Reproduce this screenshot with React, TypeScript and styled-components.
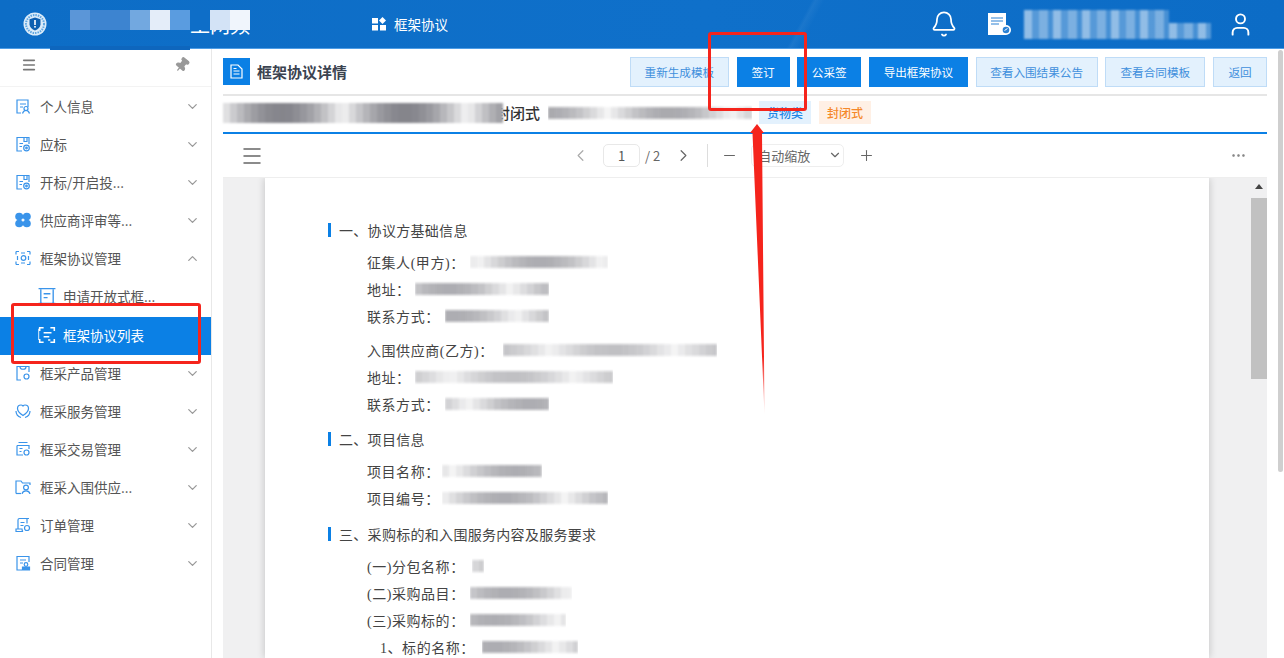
import React from "react";
import styled, { createGlobalStyle } from "styled-components";
import { Bell, ChevronDown, ChevronLeft, ChevronRight, ChevronUp, Ellipsis, Menu, Minus, Pin, Plus, User } from "lucide-react";

const GlobalStyle = createGlobalStyle`
  html, body { margin: 0; padding: 0; height: 100%; overflow: hidden; background: #fff; }
  body { font-family: "Noto Sans CJK SC", "Noto Sans", sans-serif; }
  * { box-sizing: border-box; }
`;

const Page = styled.div`
  position: relative;
  width: 1284px;
  height: 658px;
  overflow: hidden;
  display: flex;
  flex-direction: column;
`;

const Header = styled.header`
  position: relative;
  height: 49px;
  flex: none;
  display: flex;
  align-items: center;
  color: #fff;
  border-bottom: 1px solid #4e9de6;
  background:
    linear-gradient(118deg, transparent 62%, rgba(255, 255, 255, 0.05) 62.3%, transparent 63%),
    linear-gradient(90deg, #0d6dc6 0%, #0f70ca 55%, #0c6cc6 100%);
`;

const Logo = styled.div`
  width: 24px;
  height: 24px;
  margin-left: 23px;
  flex: none;
`;

const Brand = styled.div`
  position: relative;
  width: 180px;
  height: 48px;
  margin-left: 23px;
  display: flex;
  align-items: center;
  justify-content: flex-end;
  font-size: 20px;
`;

const BrandBlocks = styled.div`
  position: absolute;
  top: 10px;
  left: 0;
  display: flex;
  height: 20px;
`;

const BrandBlock = styled.span<{ $c: string; $w?: number }>`
  display: block;
  width: ${(p) => p.$w ?? 20}px;
  height: 20px;
  background: ${(p) => p.$c};
`;

const BrandEdge = styled.div`
  position: absolute;
  left: -20px;
  bottom: -2px;
  width: 140px;
  height: 4px;
  background: #0e66bd;
`;

const NavLink = styled.div`
  margin-left: 122px;
  display: flex;
  align-items: center;
  gap: 8px;
  font-size: 13.5px;
`;

const HeaderRight = styled.div`
  margin-left: auto;
  display: flex;
  align-items: center;
  padding-right: 30px;
`;

const HeaderIcon = styled.div<{ $gap?: number }>`
  display: flex;
  margin-right: ${(p) => p.$gap ?? 0}px;
`;

const UserBlur = styled.div`
  width: 187px;
  margin-right: 16px;
  display: flex;
  flex-direction: column;
  filter: blur(1.2px);
`;

const UserBlurRow = styled.span<{ $w: number; $h: number }>`
  display: block;
  width: ${(p) => p.$w}px;
  height: ${(p) => p.$h}px;
  background: repeating-linear-gradient(
    90deg,
    rgba(255, 255, 255, 0.55) 0 8px,
    rgba(255, 255, 255, 0.3) 8px 15px,
    rgba(255, 255, 255, 0.46) 15px 24px,
    rgba(255, 255, 255, 0.24) 24px 29px
  );
`;

const Body = styled.div`
  flex: 1;
  display: flex;
  min-height: 0;
`;

const Sidebar = styled.aside`
  width: 212px;
  flex: none;
  border-right: 1px solid #e8e8e8;
  color: #555;
`;

const SideTop = styled.div`
  height: 38px;
  display: flex;
  align-items: center;
  justify-content: space-between;
  padding: 0 21px 6px 21px;
  color: #777;
  border-bottom: 1px solid #f3f3f3;
`;

const PinMark = styled.span`
  display: flex;
  color: #999;
  transform: rotate(40deg);
`;

const SideItem = styled.div<{ $active?: boolean; $sub?: boolean }>`
  height: 38px;
  display: flex;
  align-items: center;
  margin-top: ${(p) => (p.$active ? 2 : 0)}px;
  margin-bottom: ${(p) => (p.$active ? -1 : 0)}px;
  padding-top: 0;
  padding-bottom: ${(p) => (p.$active ? 2 : 0)}px;
  padding-left: ${(p) => (p.$sub ? 38 : 15)}px;
  padding-right: 11px;
  gap: ${(p) => (p.$sub ? 7 : 9)}px;
  font-size: 13.5px;
  background: ${(p) => (p.$active ? "#0b80e5" : "transparent")};
  color: ${(p) => (p.$active ? "#fff" : "#555")};
`;

const SideLabel = styled.span`
  flex: 1;
  white-space: nowrap;
`;

const GlyphSvg = styled.svg`
  flex: none;
`;

const Main = styled.main`
  flex: 1;
  min-width: 0;
  padding: 0 9px 0 11px;
  display: flex;
  flex-direction: column;
  margin-right: 8px;
  position: relative;
`;

const TitleBar = styled.div`
  height: 47px;
  flex: none;
  display: flex;
  align-items: center;
  border-bottom: 2px solid #e6e6e6;
`;

const TitleIcon = styled.div`
  width: 27px;
  height: 27px;
  background: #0b80e5;
  display: flex;
  align-items: center;
  justify-content: center;
  margin-right: 7px;
`;

const Title = styled.h1`
  margin: 0;
  font-size: 15px;
  font-weight: 700;
  color: #3b4350;
`;

const Actions = styled.div`
  margin-left: auto;
  display: flex;
  gap: 7.7px;
`;

const ActionButton = styled.button<{ $w: number; $primary?: boolean }>`
  width: ${(p) => p.$w}px;
  height: 30px;
  padding: 0;
  font: inherit;
  font-size: 11.6px;
  border: 1px solid ${(p) => (p.$primary ? "#0b80e5" : "#bfdcf7")};
  background: ${(p) => (p.$primary ? "#0b80e5" : "#e3f1fd")};
  color: ${(p) => (p.$primary ? "#fff" : "#3f8fdc")};
`;

const InfoBar = styled.div`
  height: 38px;
  flex: none;
  display: flex;
  align-items: center;
  border-bottom: 2px solid #0b80e5;
  padding-bottom: 3px;
`;

// the first blurred block lies over the start of this text, as in the redacted original
const InfoText = styled.span`
  font-size: 15px;
  font-weight: 500;
  color: #333;
  margin: 0 8px 0 -8px;
  white-space: nowrap;
  flex: none;
`;

const Tag = styled.span<{ $orange?: boolean }>`
  width: 52px;
  height: 23px;
  margin-left: ${(p) => (p.$orange ? 8 : 7)}px;
  font-size: 12px;
  font-weight: 500;
  display: flex;
  align-items: center;
  justify-content: center;
  background: ${(p) => (p.$orange ? "#fff0e5" : "#e3f1fd")};
  color: ${(p) => (p.$orange ? "#f5882a" : "#2086e6")};
`;

// pseudo random grey cells, so each blurred block looks a bit different
function mosaicFill(width: number, seed: number, dark: number) {
  const cell = 7;
  const stops: string[] = [];
  for (let x = 0; x < width; x += cell) {
    const n = Math.abs(Math.sin((x + 1) * 12.9898 + seed * 78.233)) % 1;
    const a = (0.06 + n * dark).toFixed(2);
    stops.push(`rgba(70,70,80,${a}) ${x}px ${x + cell}px`);
  }
  return `linear-gradient(90deg, ${stops.join(", ")})`;
}

const Mosaic = styled.span<{ $w: number; $h?: number; $seed?: number; $dark?: number; $ml?: number }>`
  display: inline-block;
  flex: none;
  width: ${(p) => p.$w}px;
  height: ${(p) => p.$h ?? 16}px;
  margin-left: ${(p) => p.$ml ?? 0}px;
  vertical-align: middle;
  filter: blur(1px);
  mask-image: linear-gradient(180deg, transparent, #000 25%, #000 75%, transparent);
  background: ${(p) => mosaicFill(p.$w, p.$seed ?? 3, p.$dark ?? 0.38)};
`;

const CoverMosaic = styled(Mosaic)`
  position: relative;
  z-index: 1;
  mask-image: none;
  background: ${(p) => mosaicFill(p.$w, p.$seed ?? 3, p.$dark ?? 0.38)}, #fff;
`;

const Toolbar = styled.div`
  height: 44px;
  flex: none;
  display: flex;
  align-items: center;
  position: relative;
  color: #666;
  border-bottom: 1px solid #eee;
  padding-left: 17px;
  padding-right: 20px;
`;

const ToolCenter = styled.div`
  position: absolute;
  left: 348px;
  top: 9px;
  height: 24px;
  display: flex;
  align-items: center;
`;

const PageInput = styled.div`
  width: 37px;
  height: 23px;
  margin-left: 13px;
  border: 1px solid #e8e8e8;
  border-radius: 5px;
  display: flex;
  align-items: center;
  justify-content: center;
  font-size: 13px;
  color: #555;
`;

const PageTotal = styled.span`
  font-size: 13px;
  margin: 0 14px 0 5px;
`;

const ToolDivider = styled.span`
  width: 1px;
  height: 23px;
  background: #ddd;
  margin: 0 13px 0 14px;
`;

const ZoomSelect = styled.div`
  width: 93px;
  height: 23px;
  margin: 0 14px 0 13px;
  border: 1px solid #eee;
  border-radius: 5px;
  display: flex;
  align-items: center;
  justify-content: space-between;
  padding: 0 1px 0 6px;
  font-size: 13px;
  color: #666;
`;

const MoreButton = styled.div`
  margin-left: auto;
  display: flex;
  color: #777;
`;

const Viewer = styled.div`
  flex: 1;
  min-height: 0;
  display: flex;
  justify-content: flex-start;
  background: #f0f0f1;
  padding-left: 42px;
  position: relative;
  overflow: hidden;
`;

const DocPage = styled.div`
  width: 944px;
  background: #fff;
  box-shadow: 0 0 8px rgba(0, 0, 0, 0.2);
  padding: 42px 0 0 63px;
  color: #444;
  font-size: 14px;
  font-family: "Liberation Serif", "Noto Sans CJK SC", serif;
`;

const Heading = styled.div<{ $top?: number }>`
  height: 20px;
  display: flex;
  align-items: center;
  gap: 8px;
  margin-top: ${(p) => p.$top ?? 0}px;
  margin-bottom: 8px;
  letter-spacing: 0.3px;
  &::before {
    content: "";
    width: 3px;
    height: 14px;
    background: #0b80e5;
  }
`;

const Line = styled.div<{ $top?: number; $indent?: number }>`
  height: 27px;
  display: flex;
  align-items: center;
  margin-top: ${(p) => p.$top ?? 0}px;
  padding-left: ${(p) => p.$indent ?? 39}px;
  letter-spacing: 0.55px;
  white-space: nowrap;
`;

const Track = styled.div`
  position: absolute;
  right: 0;
  top: 0;
  bottom: 0;
  width: 16px;
  display: flex;
  flex-direction: column;
  align-items: center;
`;

const TrackArrow = styled.div`
  margin-top: 6px;
  width: 0;
  height: 0;
  border: 4px solid transparent;
  border-top: 0;
  border-bottom: 5px solid #444;
`;

const TrackThumb = styled.div`
  margin-top: 9px;
  width: 16px;
  height: 181px;
  background: #c1c1c1;
`;

const PageScroll = styled.div`
  position: absolute;
  right: 1px;
  top: 50px;
  width: 5px;
  height: 422px;
  border-radius: 3px;
  background: #cfcfcf;
`;

const RedBox = styled.div<{ $x: number; $y: number; $w: number; $h: number }>`
  position: absolute;
  left: ${(p) => p.$x}px;
  top: ${(p) => p.$y}px;
  width: ${(p) => p.$w}px;
  height: ${(p) => p.$h}px;
  border: 3px solid #f5241c;
  border-radius: 3px;
  pointer-events: none;
`;

const RedArrow = styled.svg`
  position: absolute;
  left: 745px;
  top: 120px;
`;

function SideGlyph({ kind, color = "#3a94ea", size = 16 }: { kind: number; color?: string; size?: number }) {
  const shapes: Record<number, React.ReactNode> = {
    0: (
      <>
        <path d="M13 9V2H2v13h4" />
        <path d="M5 6h6M5 9h3" />
        <circle cx="11" cy="10.500" r="2" />
        <path d="M7.500 15.500c.5-2 2-3 3.500-3s3 1 3.500 3" />
      </>
    ),
    1: (
      <>
        <path d="M7 15H2V1.500h12V8" />
        <path d="M9 2v3.500h3V2M4.500 7.500H8M4.500 10.500H7" />
        <circle cx="11.500" cy="12" r="2.800" />
        <circle cx="11.500" cy="12" r=".8" />
      </>
    ),
    3: (
      <g fill={color} stroke="none">
        <ellipse cx="4.200" cy="4.500" rx="4" ry="3.800" />
        <ellipse cx="11.800" cy="4.500" rx="4" ry="3.800" />
        <ellipse cx="4.200" cy="11.500" rx="4" ry="3.800" />
        <ellipse cx="11.800" cy="11.500" rx="4" ry="3.800" />
      </g>
    ),
    4: (
      <>
        <path d="M1 1.500h3M12 1.500h3M1 14.500h3M12 14.500h3M1 1.500v3M15 1.500v3M1 14.500v-3M15 14.500v-3" />
        <path d="M6 3h4M6 13h4M2.500 6v4M13.500 6v4" />
        <circle cx="8.500" cy="8" r="2.300" />
      </>
    ),
    5: (
      <>
        <path d="M.5 1.500h15M.5 14.500h3M12.500 14.500h3" />
        <path d="M2.500 2v12.500h11V2" />
        <path d="M5 6h6M5 9.500h3.500" />
      </>
    ),
    6: (
      <>
        <path d="M5 1.500H1.500v3M11 1.500h3.500v3M1.500 11.500v3H5M14.500 11.500v3H11" strokeWidth="1.400" />
        <path d="M.5 2.500v10" opacity=".7" />
        <path d="M5 6h7M5 9.500h5M9 12.500h2" strokeWidth="1.400" />
      </>
    ),
    7: (
      <>
        <path d="M6 15H2V1.500h12V7" />
        <path d="M5 2c0 3 6 3 6 0" />
        <circle cx="11.500" cy="11.500" r="2.500" />
      </>
    ),
    8: (
      <>
        <path d="M8 12.500C4 10 2.500 8 2.500 5.500 2.500 3.500 4 2 6 2c1 0 1.500.5 2 1 .5-.5 1-1 2-1 2 0 3.500 1.500 3.500 3.500 0 2.500-1.500 4.500-5.500 7z" />
        <path d="M1 8c0 3 2 5.500 5 6.500M15 8c0 3-2 5.500-5 6.500" />
      </>
    ),
    9: (
      <>
        <path d="M2 4.500V14h6M2 4.500h12V8M3.500 1.500h9" />
        <path d="M4.500 7.500h3M4.500 10.500h2" />
        <circle cx="11.500" cy="11.500" r="2.500" />
      </>
    ),
    10: (
      <>
        <path d="M1 14.500V2h5l1.500 2H15v2" />
        <path d="M1 14.500h5" />
        <circle cx="11" cy="8.500" r="2.400" />
        <path d="M7 14.800c.5-2 2-3 4-3s3.500 1 4 3" />
      </>
    ),
    11: (
      <>
        <path d="M3 12V3c0-1 .5-1.500 1.500-1.500H14M12 1.500v5" />
        <path d="M5.500 5.500h4M5.500 8.500h3M1 14.500h7c-1-.5-1-2-1-2.500H1c0 .5 0 2 0 2.500z" />
        <circle cx="12" cy="11" r="2.500" />
      </>
    ),
    12: (
      <>
        <path d="M7 15H2V1.500h12V7" />
        <path d="M5 5h6M5 8h3" />
        <circle cx="11" cy="9.500" r="1.800" />
        <path d="M7.500 15h7v-3h-7z" fill={color} />
      </>
    ),
  };
  return (
    <GlyphSvg width={size} height={size} viewBox="0 0 16 16" fill="none" stroke={color} strokeWidth="1.2">
      {shapes[kind]}
    </GlyphSvg>
  );
}

const menuTop = [
  { kind: 0, label: "个人信息" },
  { kind: 1, label: "应标" },
  { kind: 1, label: "开标/开启投..." },
  { kind: 3, label: "供应商评审等..." },
];

const menuBottom = [
  { kind: 7, label: "框采产品管理" },
  { kind: 8, label: "框采服务管理" },
  { kind: 9, label: "框采交易管理" },
  { kind: 10, label: "框采入围供应..." },
  { kind: 11, label: "订单管理" },
  { kind: 12, label: "合同管理" },
];

const actions = [
  { label: "重新生成模板", w: 99 },
  { label: "签订", w: 53, primary: true },
  { label: "公采签", w: 64, primary: true },
  { label: "导出框架协议", w: 99, primary: true },
  { label: "查看入围结果公告", w: 122 },
  { label: "查看合同模板", w: 100 },
  { label: "返回", w: 54 },
];

export default function App() {
  return (
    <Page>
      <GlobalStyle />
      <Header>
        <Logo>
          <svg width="24" height="24" viewBox="0 0 24 24">
            <circle cx="12" cy="12" r="11.500" fill="#dcecf9" />
            <circle cx="12" cy="12" r="9" fill="none" stroke="#5ea5e0" strokeWidth="2" strokeDasharray="1.500 1" />
            <path d="M12 5.500l5.500 1.800v5c0 3-2.500 5-5.500 6.200-3-1.200-5.500-3.200-5.500-6.200v-5z" fill="#0d5fb0" />
            <rect x="11.200" y="8" width="1.600" height="5" fill="#fff" />
            <rect x="11.200" y="14" width="1.600" height="1.600" fill="#fff" />
          </svg>
        </Logo>
        <Brand>
          工网频
          <BrandBlocks>
            <BrandBlock $c="#5b96d8" />
            <BrandBlock $c="#3d84d0" $w={40} />
            <BrandBlock $c="#72a8e0" />
            <BrandBlock $c="#e4edf9" />
            <BrandBlock $c="#5a9ce0" />
            <BrandBlock $c="#0e6ec8" />
            <BrandBlock $c="#d3e3f6" />
            <BrandBlock $c="#f0f5fc" />
          </BrandBlocks>
          <BrandEdge />
        </Brand>
        <NavLink>
          <svg width="14" height="14" viewBox="0 0 14 14" fill="#fff">
            <rect x="0" y="1" width="6" height="5.500" />
            <path d="M10.500 0l3.500 3.500-3.500 3.500L7 3.500z" />
            <rect x="0" y="8" width="6" height="5.500" />
            <rect x="8" y="8" width="6" height="5.500" />
          </svg>
          框架协议
        </NavLink>
        <HeaderRight>
          <HeaderIcon $gap={30}>
            <Bell size={28} strokeWidth={1.5} />
          </HeaderIcon>
          <HeaderIcon $gap={12}>
            <svg width="24" height="24" viewBox="0 0 24 24">
              <path d="M0 1h18v22H0z" fill="#fff" />
              <path d="M3 6h12M3 9h12M3 12h8" stroke="#2c82d4" strokeWidth="1.200" />
              <circle cx="18" cy="18" r="5" fill="#fff" />
              <circle cx="18" cy="18" r="3.300" fill="#2c82d4" />
              <path d="M16.500 18.500l3-2" stroke="#fff" strokeWidth="1" />
            </svg>
          </HeaderIcon>
          <UserBlur>
            <UserBlurRow $w={145} $h={13} />
            <UserBlurRow $w={187} $h={16} />
          </UserBlur>
          <User size={27} strokeWidth={1.7} />
        </HeaderRight>
      </Header>
      <Body>
        <Sidebar>
          <SideTop>
            <Menu size={16} strokeWidth={2.4} />
            <PinMark>
              <Pin size={16} fill="#999" />
            </PinMark>
          </SideTop>
          {menuTop.map((m) => (
            <SideItem key={m.label}>
              <SideGlyph kind={m.kind} />
              <SideLabel>{m.label}</SideLabel>
              <ChevronDown size={15} color="#999" />
            </SideItem>
          ))}
          <SideItem>
            <SideGlyph kind={4} />
            <SideLabel>框架协议管理</SideLabel>
            <ChevronUp size={15} color="#999" />
          </SideItem>
          <SideItem $sub>
            <SideGlyph kind={5} size={18} />
            <SideLabel>申请开放式框...</SideLabel>
          </SideItem>
          <SideItem $sub $active>
            <SideGlyph kind={6} size={18} color="#fff" />
            <SideLabel>框架协议列表</SideLabel>
          </SideItem>
          {menuBottom.map((m) => (
            <SideItem key={m.label}>
              <SideGlyph kind={m.kind} />
              <SideLabel>{m.label}</SideLabel>
              <ChevronDown size={15} color="#999" />
            </SideItem>
          ))}
        </Sidebar>
        <Main>
          <TitleBar>
            <TitleIcon>
              <svg width="13" height="15" viewBox="0 0 13 15" fill="none" stroke="#fff" strokeWidth="1.200">
                <path d="M1 1h7l4 4v9H1z" />
                <path d="M3.500 7h6M3.500 10h6M3.500 4.500h3" />
              </svg>
            </TitleIcon>
            <Title>框架协议详情</Title>
            <Actions>
              {actions.map((a) => (
                <ActionButton key={a.label} $w={a.w} $primary={a.primary}>
                  {a.label}
                </ActionButton>
              ))}
            </Actions>
          </TitleBar>
          <InfoBar>
            <CoverMosaic $w={280} $h={20} $seed={2} $dark={0.6} />
            <InfoText>封闭式</InfoText>
            <Mosaic $w={204} $h={16} $seed={7} $dark={0.4} />
            <Tag>货物类</Tag>
            <Tag $orange>封闭式</Tag>
          </InfoBar>
          <Toolbar>
            <Menu size={24} strokeWidth={1.5} />
            <ToolCenter>
              <ChevronLeft size={19} color="#aaa" strokeWidth={1.5} />
              <PageInput>1</PageInput>
              <PageTotal>/ 2</PageTotal>
              <ChevronRight size={19} strokeWidth={1.5} />
              <ToolDivider />
              <Minus size={17} strokeWidth={1.5} />
              <ZoomSelect>
                自动缩放
                <ChevronDown size={14} />
              </ZoomSelect>
              <Plus size={17} strokeWidth={1.5} />
            </ToolCenter>
            <MoreButton>
              <Ellipsis size={17} strokeWidth={1.5} />
            </MoreButton>
          </Toolbar>
          <Viewer>
            <DocPage>
              <Heading>一、协议方基础信息</Heading>
              <Line>征集人(甲方)：<Mosaic $w={138} $seed={1} $ml={5} /></Line>
              <Line>地址：<Mosaic $w={134} $seed={4} $ml={4} /></Line>
              <Line>联系方式：<Mosaic $w={104} $seed={6} $ml={5} /></Line>
              <Line $top={7}>入围供应商(乙方)：<Mosaic $w={214} $seed={8} $dark={0.28} $ml={9} /></Line>
              <Line>地址：<Mosaic $w={198} $seed={9} $dark={0.28} $ml={4} /></Line>
              <Line>联系方式：<Mosaic $w={104} $seed={10} $ml={5} /></Line>
              <Heading $top={12}>二、项目信息</Heading>
              <Line>项目名称：<Mosaic $w={100} $seed={11} $ml={2} /></Line>
              <Line>项目编号：<Mosaic $w={166} $seed={12} $ml={2} /></Line>
              <Heading $top={13}>三、采购标的和入围服务内容及服务要求</Heading>
              <Line>(一)分包名称：<Mosaic $w={12} $seed={13} $ml={7} /></Line>
              <Line>(二)采购品目：<Mosaic $w={102} $seed={14} $ml={5} /></Line>
              <Line>(三)采购标的：<Mosaic $w={96} $seed={15} $ml={5} /></Line>
              <Line $indent={52}>1、标的名称：<Mosaic $w={96} $seed={16} $ml={7} /></Line>
            </DocPage>
            <Track>
              <TrackArrow />
              <TrackThumb />
            </Track>
          </Viewer>
        </Main>
      </Body>
      <PageScroll />
      <RedBox $x={708} $y={32} $w={99} $h={79} />
      <RedBox $x={11} $y={303} $w={190} $h={61} />
      <RedArrow width="30" height="300" viewBox="0 0 30 300">
        <defs>
          <linearGradient id="arrowFade" x1="0" y1="0" x2="0" y2="1">
            <stop offset="0.8" stopColor="#f5241c" />
            <stop offset="1" stopColor="#f5241c" stopOpacity="0.1" />
          </linearGradient>
        </defs>
        <path d="M12 4L5 13h2.500L19.500 295 17 13h2z" fill="url(#arrowFade)" />
      </RedArrow>
    </Page>
  );
}
